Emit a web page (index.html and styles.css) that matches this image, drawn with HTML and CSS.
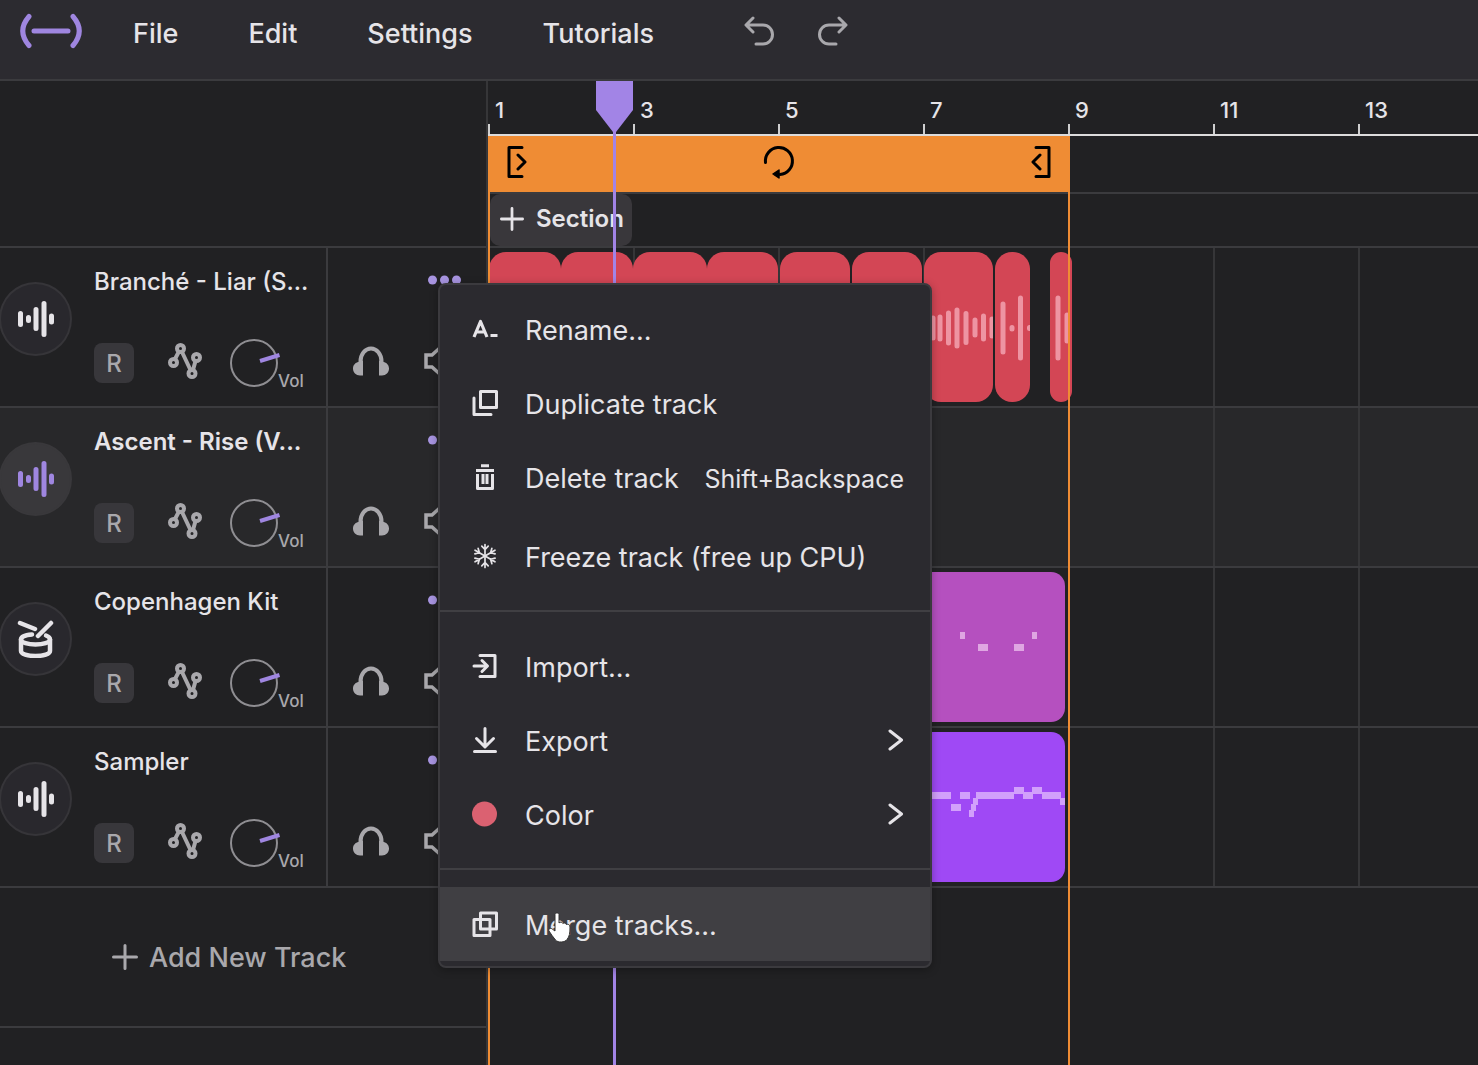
FILE: index.html
```
<!DOCTYPE html>
<html lang="en">
<head>
    <meta charset="UTF-8">
    <meta name="viewport" content="width=device-width, initial-scale=1.0">
    <title>Studio</title>
    <link rel="stylesheet" href="styles.css">
</head>
<body>
    <!-- Shared icons -->
    <svg class="icon-defs" aria-hidden="true">
        <symbol id="icon-wave" viewBox="0 0 38 38">
            <path d="M3.500 13.500v11M11.500 17.500v3M19 9.500v19M27 3.500v31M34.500 16v6" stroke="currentColor" stroke-width="5" stroke-linecap="round" fill="none"/>
        </symbol>
        <symbol id="icon-drum" viewBox="0 0 38 38">
            <g fill="none" stroke="currentColor" stroke-width="4.500" stroke-linecap="round" stroke-linejoin="round">
                <path d="M3 3l15 6M34 3L21 16"/>
                <path d="M15 14.500C8 15 4 17 4 19.500C4 22.500 11 24.500 18.500 24.500s14.500-2 14.500-5c0-1.800-1.500-3-4-4"/>
                <path d="M4 19.500v11.500c0 3 6.500 5 14.500 5s14.500-2 14.500-5v-11.500"/>
            </g>
        </symbol>
        <symbol id="icon-automation" viewBox="0 0 34 36">
            <g fill="none" stroke="currentColor" stroke-width="4">
                <circle cx="5.500" cy="19.500" r="3.500"/>
                <circle cx="12.500" cy="5.500" r="3.500"/>
                <circle cx="24" cy="30.500" r="3.500"/>
                <circle cx="28.500" cy="14.500" r="3.500"/>
                <path d="M7 16l3.700-7M14 9l8.500 18M25 27l2.500-9"/>
            </g>
        </symbol>
        <symbol id="icon-knob" viewBox="0 0 50 48">
            <circle cx="24" cy="24" r="23" fill="none" stroke="#8f8e92" stroke-width="2"/>
            <path d="M30 22l19.500-6" stroke="#9f86e0" stroke-width="4"/>
        </symbol>
        <symbol id="icon-headphones" viewBox="0 0 36 30">
            <path d="M7.500 19v-3.500a10.500 13 0 0 1 21 0V19" fill="none" stroke="currentColor" stroke-width="4"/>
            <path d="M10 14.500v15H7C3 29.500 0 26.500 0 22.500c0-3.500 2.500-6 5.500-6.500zM26 14.500v15h3c4 0 7-3 7-7c0-3.500-2.500-6-5.500-6.500z" fill="currentColor"/>
        </symbol>
        <symbol id="icon-speaker" viewBox="0 0 36 36">
            <path d="M2 12h6l10-9v30l-10-9H2zM25 11q5 7 0 14" fill="none" stroke="currentColor" stroke-width="3.500"/>
        </symbol>
        <symbol id="icon-dots" viewBox="0 0 34 10">
            <g fill="currentColor">
                <circle cx="4.500" cy="5" r="4.500"/>
                <circle cx="16.500" cy="5" r="4.500"/>
                <circle cx="28.500" cy="5" r="4.500"/>
            </g>
        </symbol>
        <symbol id="icon-plus" viewBox="0 0 26 26">
            <path d="M13 1.500v23M1.500 13h23" stroke="currentColor" stroke-width="3" stroke-linecap="round"/>
        </symbol>
        <symbol id="icon-chevron" viewBox="0 0 16 22">
            <path d="M2 2l11.500 9L2 20" fill="none" stroke="currentColor" stroke-width="3" stroke-linecap="round" stroke-linejoin="round"/>
        </symbol>
    </svg>

    <header class="topbar">
        <a class="logo" href="#" aria-label="Home">
            <svg width="64" height="38" viewBox="0 0 64 38" fill="none" stroke="#9f86e0" stroke-width="5" stroke-linecap="round">
                <path d="M10 4.500Q-2.500 19 10 33.500M54 4.500Q66.500 19 54 33.500M15 19h34"/>
            </svg>
        </a>
        <nav class="main-menu">
            <button type="button">File</button>
            <button type="button">Edit</button>
            <button type="button">Settings</button>
            <button type="button">Tutorials</button>
        </nav>
        <div class="history">
            <button type="button" aria-label="Undo">
                <svg width="30" height="30" viewBox="0 0 30 30" fill="none" stroke="currentColor" stroke-width="3" stroke-linecap="round" stroke-linejoin="round"><path d="M9 2L2 9l7 7M2.500 9H19a9.500 9.500 0 0 1 0 19h-7"/></svg>
            </button>
            <button type="button" aria-label="Redo">
                <svg width="30" height="30" viewBox="0 0 30 30" fill="none" stroke="currentColor" stroke-width="3" stroke-linecap="round" stroke-linejoin="round"><path d="M21 2l7 7-7 7M27.500 9H11a9.500 9.500 0 0 0 0 19h7"/></svg>
            </button>
        </div>
    </header>

    <main class="workspace">
        <section class="sidebar">
            <div class="sidebar-top"></div>

            <div class="track-head">
                <div class="track-icon"><svg width="38" height="38"><use href="#icon-wave"/></svg></div>
                <div class="track-main">
                    <div class="track-name">Branché - Liar (S...</div>
                    <div class="track-controls">
                        <button type="button" class="record">R</button>
                        <button type="button" class="automation" aria-label="Automation"><svg width="34" height="36"><use href="#icon-automation"/></svg></button>
                        <div class="volume"><svg width="50" height="48"><use href="#icon-knob"/></svg><span>Vol</span></div>
                    </div>
                </div>
                <div class="track-side">
                    <button type="button" class="more" aria-label="Track menu"><svg width="34" height="10"><use href="#icon-dots"/></svg></button>
                    <div class="track-output">
                        <button type="button" aria-label="Solo"><svg width="36" height="30"><use href="#icon-headphones"/></svg></button>
                        <button type="button" aria-label="Mute"><svg width="36" height="36"><use href="#icon-speaker"/></svg></button>
                    </div>
                </div>
            </div>

            <div class="track-head selected">
                <div class="track-icon"><svg width="38" height="38"><use href="#icon-wave"/></svg></div>
                <div class="track-main">
                    <div class="track-name">Ascent - Rise (V...</div>
                    <div class="track-controls">
                        <button type="button" class="record">R</button>
                        <button type="button" class="automation" aria-label="Automation"><svg width="34" height="36"><use href="#icon-automation"/></svg></button>
                        <div class="volume"><svg width="50" height="48"><use href="#icon-knob"/></svg><span>Vol</span></div>
                    </div>
                </div>
                <div class="track-side">
                    <button type="button" class="more" aria-label="Track menu"><svg width="34" height="10"><use href="#icon-dots"/></svg></button>
                    <div class="track-output">
                        <button type="button" aria-label="Solo"><svg width="36" height="30"><use href="#icon-headphones"/></svg></button>
                        <button type="button" aria-label="Mute"><svg width="36" height="36"><use href="#icon-speaker"/></svg></button>
                    </div>
                </div>
            </div>

            <div class="track-head">
                <div class="track-icon"><svg width="38" height="38"><use href="#icon-drum"/></svg></div>
                <div class="track-main">
                    <div class="track-name">Copenhagen Kit</div>
                    <div class="track-controls">
                        <button type="button" class="record">R</button>
                        <button type="button" class="automation" aria-label="Automation"><svg width="34" height="36"><use href="#icon-automation"/></svg></button>
                        <div class="volume"><svg width="50" height="48"><use href="#icon-knob"/></svg><span>Vol</span></div>
                    </div>
                </div>
                <div class="track-side">
                    <button type="button" class="more" aria-label="Track menu"><svg width="34" height="10"><use href="#icon-dots"/></svg></button>
                    <div class="track-output">
                        <button type="button" aria-label="Solo"><svg width="36" height="30"><use href="#icon-headphones"/></svg></button>
                        <button type="button" aria-label="Mute"><svg width="36" height="36"><use href="#icon-speaker"/></svg></button>
                    </div>
                </div>
            </div>

            <div class="track-head">
                <div class="track-icon"><svg width="38" height="38"><use href="#icon-wave"/></svg></div>
                <div class="track-main">
                    <div class="track-name">Sampler</div>
                    <div class="track-controls">
                        <button type="button" class="record">R</button>
                        <button type="button" class="automation" aria-label="Automation"><svg width="34" height="36"><use href="#icon-automation"/></svg></button>
                        <div class="volume"><svg width="50" height="48"><use href="#icon-knob"/></svg><span>Vol</span></div>
                    </div>
                </div>
                <div class="track-side">
                    <button type="button" class="more" aria-label="Track menu"><svg width="34" height="10"><use href="#icon-dots"/></svg></button>
                    <div class="track-output">
                        <button type="button" aria-label="Solo"><svg width="36" height="30"><use href="#icon-headphones"/></svg></button>
                        <button type="button" aria-label="Mute"><svg width="36" height="36"><use href="#icon-speaker"/></svg></button>
                    </div>
                </div>
            </div>

            <button type="button" class="add-track">
                <svg width="26" height="26"><use href="#icon-plus"/></svg>
                Add New Track
            </button>
        </section>

        <section class="timeline">
            <div class="ruler">
                <span>1</span>
                <span>3</span>
                <span>5</span>
                <span>7</span>
                <span>9</span>
                <span>11</span>
                <span>13</span>
            </div>
            <div class="loop-row">
                <div class="loop-bar">
                    <svg width="20" height="32" viewBox="0 0 20 32" fill="none" stroke="#000" stroke-width="3" stroke-linecap="round" stroke-linejoin="round"><path d="M15 1.500H2v29h13M11 9l7 7-7 7"/></svg>
                    <svg width="32" height="34" viewBox="0 0 32 34" fill="none" stroke="#000" stroke-width="3" stroke-linecap="round"><path d="M2.500 17.500A13.500 13.500 0 1 1 17 29.500"/><path d="M16 25v8l-6-4z" fill="#000" stroke-width="1.500" stroke-linejoin="round"/></svg>
                    <svg width="20" height="32" viewBox="0 0 20 32" fill="none" stroke="#000" stroke-width="3" stroke-linecap="round" stroke-linejoin="round"><path d="M5 1.500h13v29H5M9 9l-7 7 7 7"/></svg>
                </div>
            </div>
            <div class="section-row">
                <button type="button" class="add-section">
                    <svg width="24" height="24"><use href="#icon-plus"/></svg>
                    Section
                </button>
            </div>

            <div class="lane">
                <div class="clip red joined" style="width: 72px"></div>
                <div class="clip red joined" style="width: 72px"></div>
                <div class="clip red joined" style="width: 74px"></div>
                <div class="clip red" style="width: 71px"></div>
                <div class="clip red" style="width: 70px"></div>
                <div class="clip red" style="width: 70px"></div>
                <div class="clip red" style="width: 69px">
                    <svg width="69" height="150" stroke="#ee94a2" stroke-width="5" stroke-linecap="round"><path d="M9 66v20M16 65v22M24.500 61v30M33 58v36M42 61.500v29M51 68v15M59.500 64v23M68 67v17"/></svg>
                </div>
                <div class="clip red" style="width: 35px">
                    <svg width="35" height="150" stroke="#ee94a2" stroke-width="5" stroke-linecap="round"><path d="M8 52v48M17 75.500v1.500M25.500 46v60M34.500 75.500v1"/></svg>
                </div>
                <div class="clip red after-rest" style="width: 22px">
                    <svg width="22" height="150" stroke="#ee94a2" stroke-width="5" stroke-linecap="round"><path d="M8 46v60M17 63v26"/></svg>
                </div>
            </div>

            <div class="lane selected"></div>

            <div class="lane">
                <div class="clip magenta" style="width: 576px">
                    <svg width="576" height="150" fill="#dfa6e2"><path d="M471 60h5v7h-5zM489 72h10v7h-10zM525 72h10v7h-10zM543 60h5v7h-5z"/></svg>
                </div>
            </div>

            <div class="lane">
                <div class="clip violet" style="width: 576px">
                    <svg width="576" height="150" fill="#d2a0fb"><path d="M430 60h32v7h-32zM462 72h10v7h-10zM471 60h10v7h-10zM480 78h5v7h-5zM482 72h5v7h-5zM484 66h5v7h-5zM487 60h38v7h-38zM525 55h10v7h-10zM534 60h10v7h-10zM543 55h10v7h-10zM553 60h19v7h-19zM571 66h5v7h-5z"/></svg>
                </div>
            </div>

            <div class="loop-edge loop-start"></div>
            <div class="loop-edge loop-end"></div>
            <div class="playhead">
                <svg width="37" height="53" viewBox="0 0 37 53" fill="#a284e6"><path d="M0 0h37v29L18.500 53 0 29z"/></svg>
            </div>
        </section>

        <!-- Track context menu -->
        <div class="context-menu">
            <button type="button">
                <svg width="26" height="26" viewBox="0 0 26 26" fill="none" stroke="currentColor" stroke-width="3.200" stroke-linejoin="round"><path d="M2 21L8.500 5.500 15 21M4.500 16h8M18.500 19.500h7"/></svg>
                Rename...
            </button>
            <button type="button">
                <svg width="26" height="26" viewBox="0 0 26 26" fill="none" stroke="currentColor" stroke-width="3" stroke-linejoin="round" stroke-linecap="round"><path d="M8.500 1.500h16v16h-16zM2 8v16.500h17"/></svg>
                Duplicate track
            </button>
            <button type="button">
                <svg width="26" height="26" viewBox="0 0 26 26" fill="none" stroke="currentColor" stroke-width="3" stroke-linejoin="round"><path d="M9 1.800h8M4 6.500h18M5.500 10v14.500h15V10M11 10v10M15 10v10"/></svg>
                Delete track
                <kbd>Shift+Backspace</kbd>
            </button>
            <button type="button" class="freeze">
                <svg width="26" height="26" viewBox="0 0 26 26" fill="none" stroke="currentColor" stroke-width="1.700" stroke-linecap="round">
                    <g id="flake-arm"><path d="M13 13V1.500M9.800 3.200L13 6.500l3.200-3.300"/></g>
                    <use href="#flake-arm" transform="rotate(60 13 13)"/>
                    <use href="#flake-arm" transform="rotate(120 13 13)"/>
                    <use href="#flake-arm" transform="rotate(180 13 13)"/>
                    <use href="#flake-arm" transform="rotate(240 13 13)"/>
                    <use href="#flake-arm" transform="rotate(300 13 13)"/>
                </svg>
                Freeze track (free up CPU)
            </button>
            <hr>
            <button type="button">
                <svg width="26" height="26" viewBox="0 0 26 26" fill="none" stroke="currentColor" stroke-width="3" stroke-linejoin="round" stroke-linecap="round"><path d="M8 2.500h15v21H8M2 13h13M10 7.500l5.500 5.500L10 18.500"/></svg>
                Import...
            </button>
            <button type="button">
                <svg width="26" height="26" viewBox="0 0 26 26" fill="none" stroke="currentColor" stroke-width="3" stroke-linejoin="round" stroke-linecap="round"><path d="M13 1.500v18M4.500 11.500L13 20l8.500-8.500M2.500 24.500h21"/></svg>
                Export
                <svg class="chevron" width="16" height="22"><use href="#icon-chevron"/></svg>
            </button>
            <button type="button">
                <svg width="26" height="26" viewBox="0 0 26 26" fill="#db6171"><circle cx="12.500" cy="13" r="12.500"/></svg>
                Color
                <svg class="chevron" width="16" height="22"><use href="#icon-chevron"/></svg>
            </button>
            <hr>
            <button type="button" class="active">
                <svg width="26" height="26" viewBox="0 0 26 26" fill="none" stroke="currentColor" stroke-width="3" stroke-linejoin="round"><path d="M8.500 2h16v16h-16zM2 8.500h16v16H2z"/></svg>
                Merge tracks...
            </button>
            <svg class="cursor" width="26" height="32" viewBox="0 0 26 32" fill="#fff" stroke="#333" stroke-width="1"><path d="M8 2.500c0-2 4-2 4 0V11c1-1.500 3.500-1 3.800.5c1.200-1 3.200-.5 3.500 1c1.500-.6 3.700 0 3.700 2.500c0 6-.5 9.500-3 12.500c-2 3-9 3.500-11.500.5C6 25 4 22 2 19c-1-2 1.500-3.500 3.200-2L8 19z"/></svg>
        </div>
    </main>
</body>
</html>
```
FILE: styles.css
```
* {
    box-sizing: border-box;
}
body {
    margin: 0;
    min-height: 100vh;
    display: flex;
    flex-direction: column;
    overflow: hidden;
    font-family: Inter, "Liberation Sans", sans-serif;
    font-size: 24px;
    color: #e6e4e8;
    background-color: #212123;
}
button {
    display: flex;
    align-items: center;
    padding: 0;
    border: none;
    background: none;
    color: inherit;
    font: inherit;
    white-space: nowrap;
    cursor: pointer;
}
svg {
    display: block;
    flex: none;
}
.icon-defs {
    position: absolute;
    width: 0;
    height: 0;
}

/* Top bar */
.topbar {
    display: flex;
    align-items: center;
    height: 81px;
    padding: 0 19px 12px;
    background-color: #2c2b30;
    border-bottom: 2px solid #3b3b3e;
}
.logo,
.history {
    padding-bottom: 6px;
}
.main-menu {
    display: flex;
    gap: 70px;
    margin-left: 50px;
    font-size: 27px;
    font-weight: 500;
}
.history {
    display: flex;
    gap: 44px;
    margin-left: 90px;
    color: #a9a8ac;
}

/* Layout */
.workspace {
    position: relative;
    flex: 1;
    display: flex;
}
.sidebar {
    flex: none;
    width: 488px;
    border-right: 2px solid #363638;
}
.sidebar-top {
    height: 167px;
    border-bottom: 2px solid #3b3b3e;
}

/* Track headers */
.track-head {
    display: flex;
    height: 160px;
    border-bottom: 2px solid #3b3b3e;
}
.track-head.selected {
    background-color: #28282a;
}
.track-icon {
    display: flex;
    align-items: center;
    justify-content: center;
    width: 73px;
    height: 74px;
    margin: 34px 22px 0 -1px;
    border: 2px solid #363539;
    border-radius: 50%;
    background-color: #29282d;
}
.selected .track-icon {
    background-color: #39383b;
    border-color: #39383b;
    color: #9f86e0;
}
.track-main {
    width: 234px;
    padding-top: 18px;
    border-right: 2px solid #3b3b3e;
}
.track-name {
    font-weight: 500;
    line-height: 32px;
    white-space: nowrap;
}
.selected .track-name {
    font-weight: 600;
}
.track-controls {
    display: flex;
    align-items: center;
    height: 48px;
    margin-top: 41px;
    color: #a9a8ac;
}
.record {
    justify-content: center;
    width: 40px;
    height: 40px;
    border-radius: 8px;
    background-color: #38373b;
    font-weight: 500;
}
.automation {
    margin: 0 28px 4px 34px;
}
.volume {
    display: flex;
    align-items: flex-end;
    font-size: 17px;
    font-weight: 500;
    line-height: 12px;
}
.volume svg {
    margin-right: -2px;
}
.track-side {
    flex: 1;
    display: flex;
    flex-direction: column;
    padding: 18px 24px 0 25px;
}
.more {
    align-self: flex-end;
    height: 28px;
    color: #a794e0;
}
.track-output {
    display: flex;
    align-items: center;
    gap: 35px;
    height: 36px;
    margin-top: 49px;
    color: #a9a8ac;
}
.add-track {
    width: 100%;
    height: 140px;
    gap: 11px;
    padding-left: 112px;
    border-bottom: 2px solid #3b3b3e;
    color: #a9a8ac;
    font-size: 27px;
    font-weight: 500;
}

/* Timeline */
.timeline {
    position: relative;
    flex: 1;
    min-width: 0;
    overflow: hidden;
}
.ruler {
    display: flex;
    height: 55px;
    border-bottom: 2px solid #dddcdc;
}
.ruler span {
    flex: none;
    width: 145px;
    padding: 17px 0 0 7px;
    font-size: 22px;
    font-weight: 500;
    line-height: 24px;
    background: linear-gradient(#cfcfcf, #cfcfcf) left bottom / 2px 10px no-repeat;
}
.loop-row {
    height: 58px;
    border-bottom: 2px solid #3b3b3e;
}
.loop-bar {
    display: flex;
    align-items: center;
    justify-content: space-between;
    width: 582px;
    height: 56px;
    padding: 0 19px 4px;
    background-color: #ef8c34;
}
.section-row {
    height: 54px;
    padding-left: 2px;
    border-bottom: 2px solid #3b3b3e;
}
.add-section {
    width: 142px;
    height: 52px;
    gap: 12px;
    padding: 0 0 3px 10px;
    border-radius: 10px;
    background-color: #39373b;
    font-weight: 600;
}
.lane {
    display: flex;
    gap: 2px;
    height: 160px;
    padding: 4px 1px;
    border-bottom: 2px solid #3b3b3e;
    background: repeating-linear-gradient(to right, #363638 0 2px, transparent 2px 145px);
}
.lane.selected {
    background-color: #28282a;
}
.clip {
    flex: none;
    height: 150px;
    border-radius: 14px;
    overflow: hidden;
}
.clip.red {
    border-radius: 17px;
    background-color: #d34655;
}
.clip.magenta {
    background-color: #b550bf;
}
.clip.violet {
    background-color: #9f49f5;
}
.clip.joined {
    margin-right: -2px;
}
.clip.after-rest {
    margin-left: 18px;
}
.loop-edge {
    position: absolute;
    top: 55px;
    bottom: 0;
    width: 2px;
    background-color: #ef8c34;
}
.loop-start {
    left: 0;
}
.loop-end {
    left: 580px;
}
.playhead {
    position: absolute;
    top: 0;
    bottom: 0;
    left: 108px;
    width: 37px;
    background: linear-gradient(#a284e6, #a284e6) center / 3px 100% no-repeat;
}

/* Context menu */
.context-menu {
    position: absolute;
    top: 202px;
    left: 438px;
    width: 494px;
    padding: 7px 0 5px;
    border: 2px solid #3b3a3e;
    border-radius: 8px;
    background-color: #2b2a2f;
    box-shadow: 0 2px 8px rgba(0, 0, 0, 0.3);
    font-size: 27px;
}
.context-menu button {
    width: 100%;
    height: 74px;
    gap: 20px;
    padding: 3px 26px 0 32px;
}
.context-menu button svg {
    margin: 0 7px 3px 0;
}
.context-menu button.active {
    background-color: #403f43;
}
.context-menu .freeze {
    margin-top: 5px;
}
.context-menu kbd {
    margin-left: auto;
    font-family: inherit;
    font-size: 25px;
}
.context-menu hr {
    margin: 17px 0;
    border: none;
    border-top: 2px solid #403f43;
}
.context-menu button .chevron {
    margin: 0 0 3px auto;
}
.cursor {
    position: absolute;
    left: 107px;
    bottom: 22px;
}
```
